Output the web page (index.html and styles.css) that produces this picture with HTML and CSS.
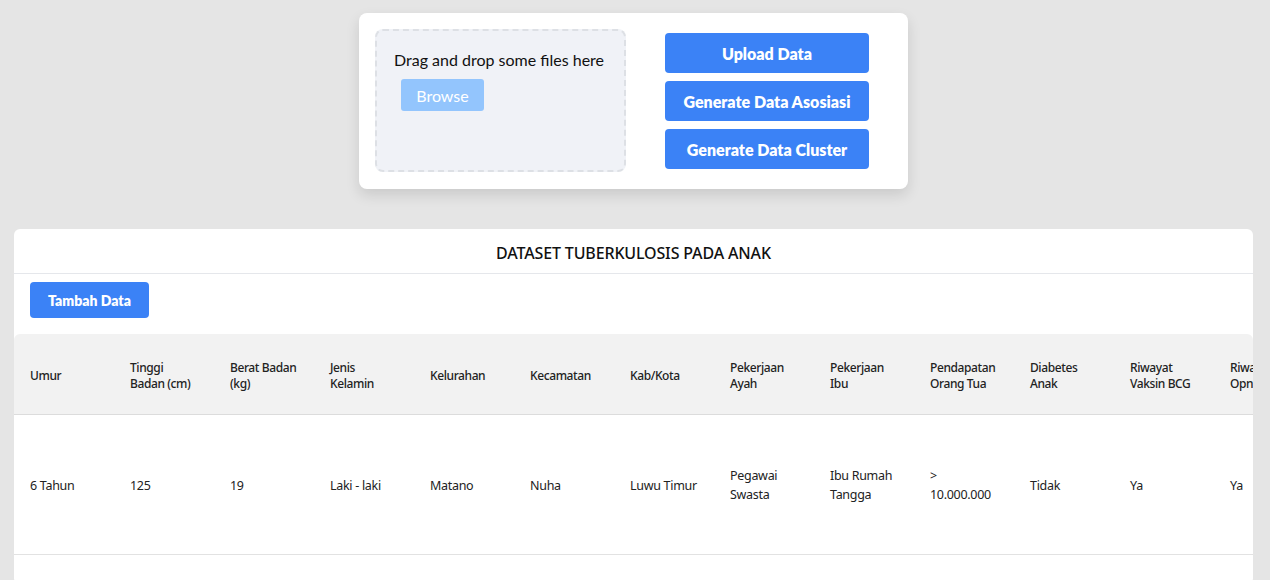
FILE: index.html
```html
<!DOCTYPE html>
<html lang="id">
<head>
<meta charset="utf-8">
<title>Dataset Tuberkulosis</title>
<link rel="stylesheet" href="styles.css">
</head>
<body>
<div class="top">
  <div class="upload-card">
    <div class="dropzone">
      <p class="drop-text">Drag and drop some files here</p>
      <button class="browse">Browse</button>
    </div>
    <div class="actions">
      <button class="btn btn-lg">Upload Data</button>
      <button class="btn btn-lg">Generate Data Asosiasi</button>
      <button class="btn btn-lg">Generate Data Cluster</button>
    </div>
  </div>
</div>
<div class="main">
  <div class="data-card">
    <div class="card-title">DATASET TUBERKULOSIS PADA ANAK</div>
    <div class="toolbar"><button class="btn btn-sm">Tambah Data</button></div>
    <div class="table-wrap">
      <table>
        <thead>
          <tr>
            <th>Umur</th><th>Tinggi<br>Badan (cm)</th><th>Berat Badan<br>(kg)</th><th>Jenis<br>Kelamin</th>
            <th>Kelurahan</th><th>Kecamatan</th><th>Kab/Kota</th><th>Pekerjaan<br>Ayah</th>
            <th>Pekerjaan<br>Ibu</th><th>Pendapatan<br>Orang Tua</th><th>Diabetes<br>Anak</th>
            <th>Riwayat<br>Vaksin BCG</th><th>Riwayat<br>Opname</th>
          </tr>
        </thead>
        <tbody>
          <tr>
            <td>6 Tahun</td><td>125</td><td>19</td><td>Laki - laki</td><td>Matano</td><td>Nuha</td>
            <td>Luwu Timur</td><td>Pegawai<br>Swasta</td><td>Ibu Rumah<br>Tangga</td><td>&gt;<br>10.000.000</td>
            <td>Tidak</td><td>Ya</td><td>Ya</td>
          </tr>
          <tr class="empty"><td colspan="13"></td></tr>
        </tbody>
      </table>
    </div>
  </div>
</div>
</body>
</html>
```
FILE: styles.css
```css
* { box-sizing: border-box; }
html, body { margin: 0; padding: 0; }
body {
  background: #e5e5e5;
  font-family: "Lato", "Noto Sans", sans-serif;
  color: #1f2937;
  overflow: hidden;
  height: 580px;
}
button { font-family: inherit; border: 0; cursor: pointer; }
.top {
  display: flex;
  justify-content: center;
  padding-top: 13px;
  padding-right: 3px;
}
.upload-card {
  width: 549px;
  height: 176px;
  background: #fff;
  border-radius: 8px;
  box-shadow: 0 6px 14px rgba(0,0,0,0.12);
  padding: 16px;
  display: flex;
  gap: 39px;
}
.dropzone {
  width: 251px;
  height: 143px;
  background: #f0f2f7;
  border: 2px dashed #dde0e5;
  border-radius: 8px;
  padding: 19px 16px 0 17px;
}
.drop-text {
  margin: 0;
  font-size: 16px;
  line-height: 20px;
  color: #111;
}
.browse {
  margin: 9px 0 0 7px;
  width: 83px;
  height: 32px;
  background: #93c5fd;
  color: #fff;
  font-size: 16px;
  border-radius: 3px;
}
.actions {
  display: flex;
  flex-direction: column;
  gap: 8px;
  padding-top: 4px;
}
.btn {
  background: #3b82f6;
  color: #fff;
  font-weight: 800;
  border-radius: 4px;
}
.btn-lg {
  width: 204px;
  height: 40px;
  font-size: 16px;
}
.btn-sm {
  width: 119px;
  height: 36px;
  font-size: 14px;
}
.main {
  padding: 40px 17px 0 14px;
}
.data-card {
  background: #fff;
  border-radius: 6px;
  overflow: hidden;
}
.card-title {
  height: 45px;
  border-bottom: 1px solid #e5e7eb;
  text-align: center;
  font-family: "Noto Sans", sans-serif;
  font-size: 16px;
  font-weight: 500;
  letter-spacing: -0.15px;
  line-height: 48px;
  color: #111;
}
.toolbar {
  padding: 8px 16px 16px;
}
.table-wrap {
  overflow: hidden;
  border-radius: 6px 6px 0 0;
}
table {
  border-collapse: collapse;
  table-layout: fixed;
  width: 1300px;
  font-family: "Noto Sans", sans-serif;
  color: #222;
}
th, td {
  width: 100px;
  padding: 0 8px 0 16px;
  text-align: left;
  vertical-align: middle;
  white-space: nowrap;
}
th {
  height: 80px;
  padding-top: 4px;
  background: #f2f2f2;
  font-size: 12px;
  font-weight: 500;
  letter-spacing: -0.4px;
  line-height: 16px;
  border-bottom: 1px solid #dcdcdc;
}
td {
  height: 140px;
  padding-top: 2px;
  font-size: 12.5px;
  letter-spacing: -0.3px;
  line-height: 19px;
  border-bottom: 1px solid #e2e2e2;
}
tr.empty td { height: 30px; border: 0; }
```
